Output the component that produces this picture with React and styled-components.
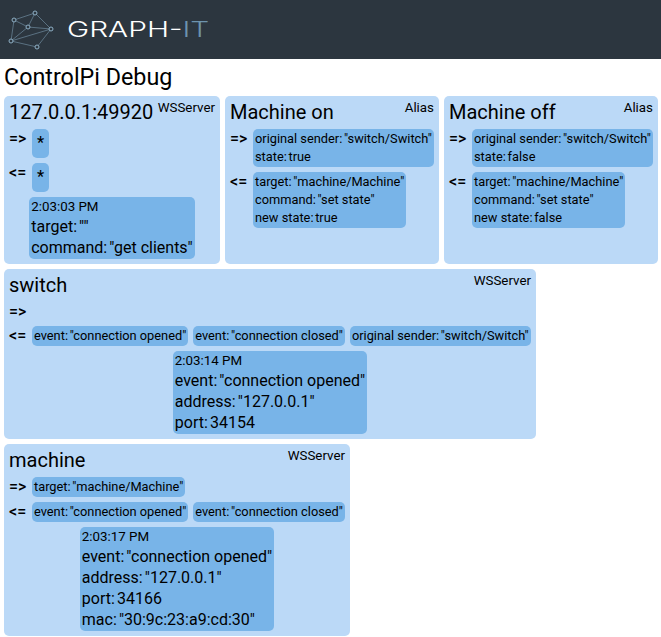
import React from "react";
import styled, { createGlobalStyle } from "styled-components";

const Global = createGlobalStyle`
  html, body { margin: 0; padding: 0; background: #fff; }
  body { font-family: Roboto, "Liberation Sans", sans-serif; color: #000; }
`;
const Header = styled.header`
  height: 59px; background: #2c363f; display: flex; align-items: center; padding-left: 8px; gap: 7px;
`;
const Brand = styled.div`
  font-family: Inter, sans-serif; font-weight: 300; font-size: 21px; color: #fff; line-height: 1;
  transform: scaleX(1.42); transform-origin: left center;
  span { color: #6d93ad; }
`;
const Title = styled.h1`
  font-size: 23.3px; font-weight: 400; line-height: 28px; margin: 0; padding: 4px 4px 5px;
`;
const Wrap = styled.main`
  display: flex; flex-wrap: wrap; gap: 5px; padding: 0 3px 0 4px; align-items: stretch;
`;
const Panel = styled.section`
  width: ${p => p.$width}px;
  background: #bbd9f7; border-radius: 5px; padding: 5px; box-sizing: border-box;
`;
const PanelHead = styled.div`
  display: flex; justify-content: space-between; align-items: flex-start; margin-bottom: 5px;
`;
const Name = styled.h2`
  font-size: 20px; font-weight: 400; line-height: 23px; margin: 0;
`;
const Type = styled.span`
  font-size: 13.33px; line-height: 13px;
`;
const Row = styled.div`
  display: flex; gap: 5px; align-items: flex-start; margin-bottom: 5px;
`;
const Dir = styled.span`
  font-weight: 500; font-size: 16px; line-height: 19px; width: 18px; flex: none;
`;
const Msg = styled.div`
  background: #78b4e8; border-radius: 5px; padding: 1px 2px; font-size: 12.8px; line-height: 18px; white-space: nowrap;
`;
const Star = styled.div`
  background: #78b4e8; border-radius: 5px; font-size: 16px; font-weight: 500; width: 17px; height: 29px; line-height: 27px; text-align: center;
`;
const Log = styled.div`
  background: #78b4e8; border-radius: 5px; padding: 2px 2px 1px; font-size: 16px; line-height: 21px; width: fit-content; margin: 0 auto; white-space: nowrap;
`;
const Time = styled.div`
  font-size: 13.33px; line-height: 16px; margin-bottom: 1px;
`;
const Value = styled.span`
  margin-left: 0.13em;
`;
const Fields = ({ data }) => Object.entries(data).map(([k, v]) => <div key={k}>{k}:<Value>{v}</Value></div>);
const Item = ({ m }) => m === "*" ? <Star>*</Star> : <Msg><Fields data={m} /></Msg>;

const Box = ({ name, type, width, out, inc, log, time }) => (
  <Panel $width={width}>
    <PanelHead><Name>{name}</Name><Type>{type}</Type></PanelHead>
    <Row><Dir>=&gt;</Dir>{out.map((m, i) => <Item key={i} m={m} />)}</Row>
    <Row><Dir>&lt;=</Dir>{inc.map((m, i) => <Item key={i} m={m} />)}</Row>
    {log && <Log><Time>{time}</Time><Fields data={log} /></Log>}
  </Panel>
);

const nodes = [[35,12],[14,19],[28,26],[51,28],[11,40],[37,46]];
const edges = [[0,1],[0,2],[0,3],[1,2],[1,4],[2,3],[2,4],[3,4],[3,5],[4,5]];
const Logo = () => (
  <svg width="52" height="52" viewBox="8 3 52 52" fill="none" stroke="#6d8a9e" strokeWidth="1">
    {edges.map(([a, b], i) => <line key={i} x1={nodes[a][0]} y1={nodes[a][1]} x2={nodes[b][0]} y2={nodes[b][1]} strokeOpacity=".7" />)}
    {nodes.map(([x, y], i) => <circle key={i} cx={x} cy={y} r="2" fill="#2c363f" stroke="#8fb0c6" />)}
  </svg>
);

export default function App() {
  return (
    <>
      <Global />
      <Header><Logo /><Brand>GRAPH-<span>IT</span></Brand></Header>
      <Title>ControlPi Debug</Title>
      <Wrap>
        <Box width={216} name="127.0.0.1:49920" type="WSServer" out={["*"]} inc={["*"]} time="2:03:03 PM" log={{ target: '""', command: '"get clients"' }} />
        <Box width={214} name="Machine on" type="Alias" out={[{ "original sender": '"switch/Switch"', state: "true" }]} inc={[{ target: '"machine/Machine"', command: '"set state"', "new state": "true" }]} />
        <Box width={214} name="Machine off" type="Alias" out={[{ "original sender": '"switch/Switch"', state: "false" }]} inc={[{ target: '"machine/Machine"', command: '"set state"', "new state": "false" }]} />
        <Box width={532} name="switch" type="WSServer" out={[]} inc={[{ event: '"connection opened"' }, { event: '"connection closed"' }, { "original sender": '"switch/Switch"' }]} time="2:03:14 PM" log={{ event: '"connection opened"', address: '"127.0.0.1"', port: "34154" }} />
        <Box width={346} name="machine" type="WSServer" out={[{ target: '"machine/Machine"' }]} inc={[{ event: '"connection opened"' }, { event: '"connection closed"' }]} time="2:03:17 PM" log={{ event: '"connection opened"', address: '"127.0.0.1"', port: "34166", mac: '"30:9c:23:a9:cd:30"' }} />
      </Wrap>
    </>
  );
}
